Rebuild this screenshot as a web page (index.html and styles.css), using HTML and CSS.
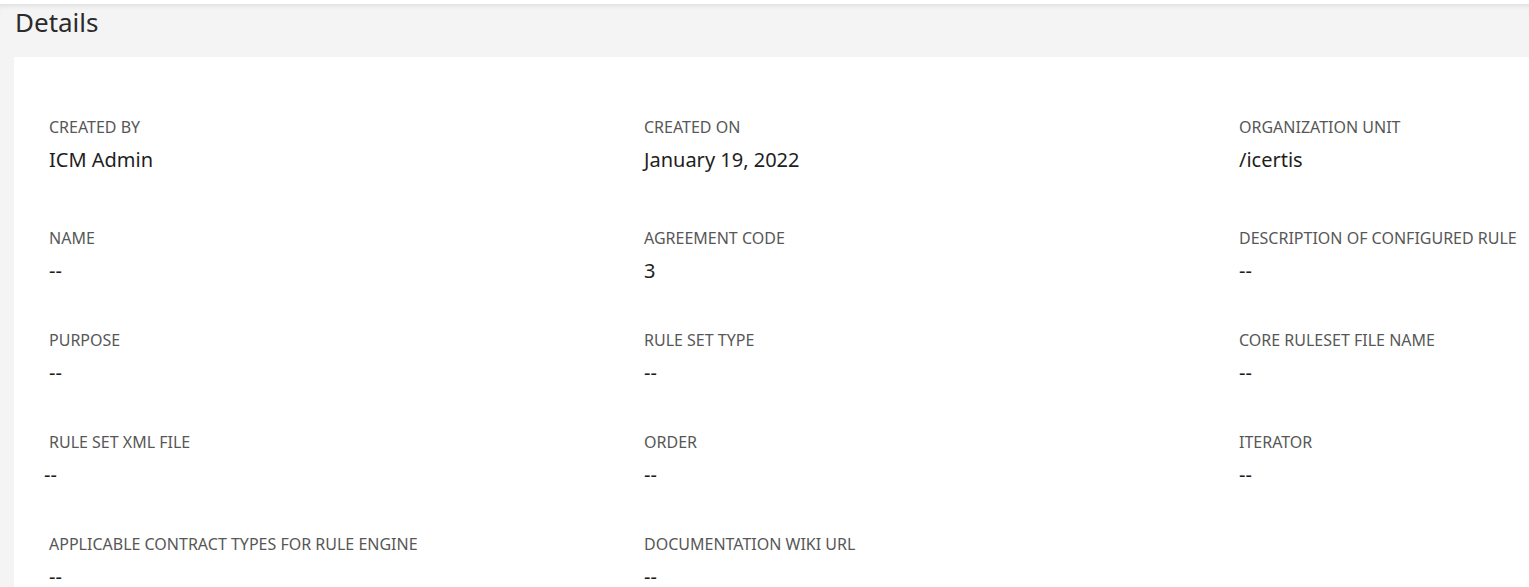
FILE: index.html
```html
<!DOCTYPE html>
<html lang="en">
<head>
<meta charset="utf-8">
<title>Details</title>
<link rel="stylesheet" href="styles.css">
</head>
<body>
<div class="page">
  <header class="page-head">
    <h1 class="page-title">Details</h1>
  </header>
  <section class="card">
    <div class="fields">
      <div class="field field--lead"><div class="label">CREATED BY</div><div class="value">ICM Admin</div></div>
      <div class="field field--lead"><div class="label">CREATED ON</div><div class="value">January 19, 2022</div></div>
      <div class="field field--lead"><div class="label">ORGANIZATION UNIT</div><div class="value">/icertis</div></div>

      <div class="field"><div class="label">NAME</div><div class="value">--</div></div>
      <div class="field"><div class="label">AGREEMENT CODE</div><div class="value">3</div></div>
      <div class="field"><div class="label">DESCRIPTION OF CONFIGURED RULE</div><div class="value">--</div></div>

      <div class="field"><div class="label">PURPOSE</div><div class="value">--</div></div>
      <div class="field"><div class="label">RULE SET TYPE</div><div class="value">--</div></div>
      <div class="field"><div class="label">CORE RULESET FILE NAME</div><div class="value">--</div></div>

      <div class="field"><div class="label">RULE SET XML FILE</div><div class="value value--shift">--</div></div>
      <div class="field"><div class="label">ORDER</div><div class="value">--</div></div>
      <div class="field"><div class="label">ITERATOR</div><div class="value">--</div></div>

      <div class="field"><div class="label">APPLICABLE CONTRACT TYPES FOR RULE ENGINE</div><div class="value">--</div></div>
      <div class="field"><div class="label">DOCUMENTATION WIKI URL</div><div class="value">--</div></div>
    </div>
  </section>
</div>
</body>
</html>
```
FILE: styles.css
```css
html, body {
  margin: 0;
  padding: 0;
  height: 100%;
  overflow: hidden;
  background: #ffffff;
  font-family: "Noto Sans", Lato, sans-serif;
}

.page {
  margin-top: 4px;
  background: #f4f4f4;
  min-height: calc(100% - 4px);
  box-shadow: inset 0 5px 5px -3px rgba(0, 0, 0, 0.09);
}

.page-head {
  height: 53px;
  padding-left: 15px;
  display: flex;
  align-items: flex-start;
}

.page-title {
  margin: 2px 0 0;
  font-size: 26px;
  line-height: 32px;
  font-weight: 400;
  color: #2b2b2b;
}

.card {
  margin-left: 14px;
  background: #ffffff;
  padding: 60px 0 40px 35px;
  min-height: 600px;
}

.fields {
  display: grid;
  grid-template-columns: repeat(3, 595px);
  row-gap: 47px;
}

.field--lead {
  padding-bottom: 9px;
}

.label {
  font-size: 16px;
  line-height: 20px;
  color: #575757;
}

.value {
  margin-top: 11px;
  font-size: 20px;
  line-height: 24px;
  color: #1e1e1e;
}

.value--shift {
  margin-left: -5px;
}
```
